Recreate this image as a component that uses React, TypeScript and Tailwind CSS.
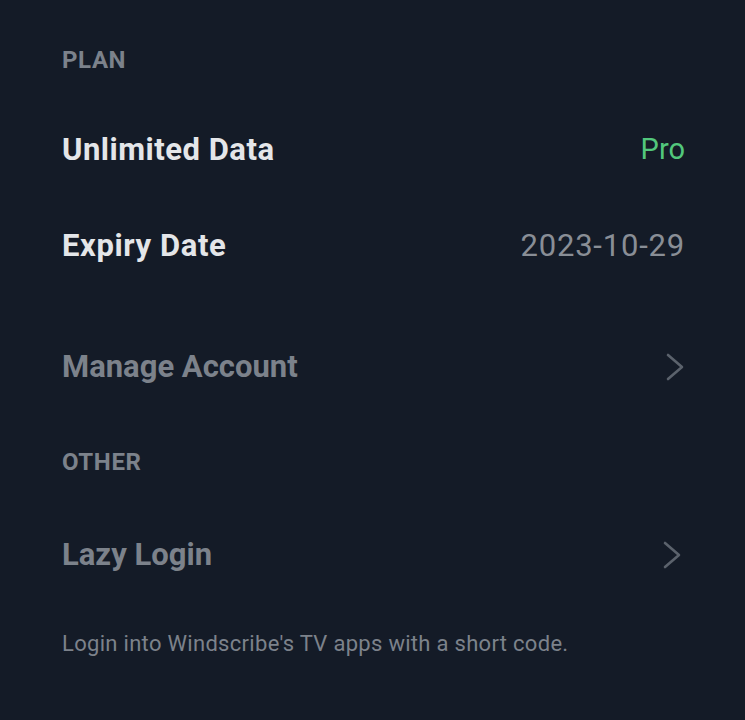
const Chevron = () => (
  <svg width="21" height="28" viewBox="0 0 21 28" fill="none" className="text-[#5b626c]">
    <polyline points="4,2 18,14 4,26" stroke="currentColor" strokeWidth="2.6" strokeLinecap="round" strokeLinejoin="round" />
  </svg>
);

const App = () => {
  return (
    <div
      className="min-h-screen w-full bg-[#141b27] pl-[62px] pr-[60px] pt-[38px] flex flex-col"
      style={{ fontFamily: "Roboto, 'Noto Sans', sans-serif" }}
    >
      <div className="h-[44px] flex items-center text-[24px] font-bold text-[#7c828b] tracking-[0.6px]">PLAN</div>

      <div className="mt-[20px] h-[96px] flex items-center justify-between">
        <span className="text-[31px] font-bold text-[#e4e6e9] tracking-[0.5px]">Unlimited Data</span>
        <span className="text-[29px] text-[#52c77c]">Pro</span>
      </div>

      <div className="h-[96px] flex items-center justify-between">
        <span className="text-[31px] font-bold text-[#e4e6e9] tracking-[0.6px]">Expiry Date</span>
        <span className="text-[31px] text-[#898e96] tracking-[0.8px]">2023-10-29</span>
      </div>

      <div className="mt-[25px] h-[96px] flex items-center justify-between">
        <span className="text-[31px] font-bold text-[#7c828b]">Manage Account</span>
        <Chevron />
      </div>

      <div className="mt-[25px] h-[44px] flex items-center text-[24px] font-bold text-[#7c828b] tracking-[0.6px]">OTHER</div>

      <div className="mt-[23px] h-[96px] flex items-center justify-between">
        <span className="text-[31px] font-bold text-[#7c828b]">Lazy Login</span>
        <span className="mr-[3px]">
          <Chevron />
        </span>
      </div>

      <div className="mt-[18px] h-[44px] flex items-center text-[22px] text-[#7c828b] tracking-[0.3px]">
        Login into Windscribe's TV apps with a short code.
      </div>
    </div>
  );
};

export default App;
